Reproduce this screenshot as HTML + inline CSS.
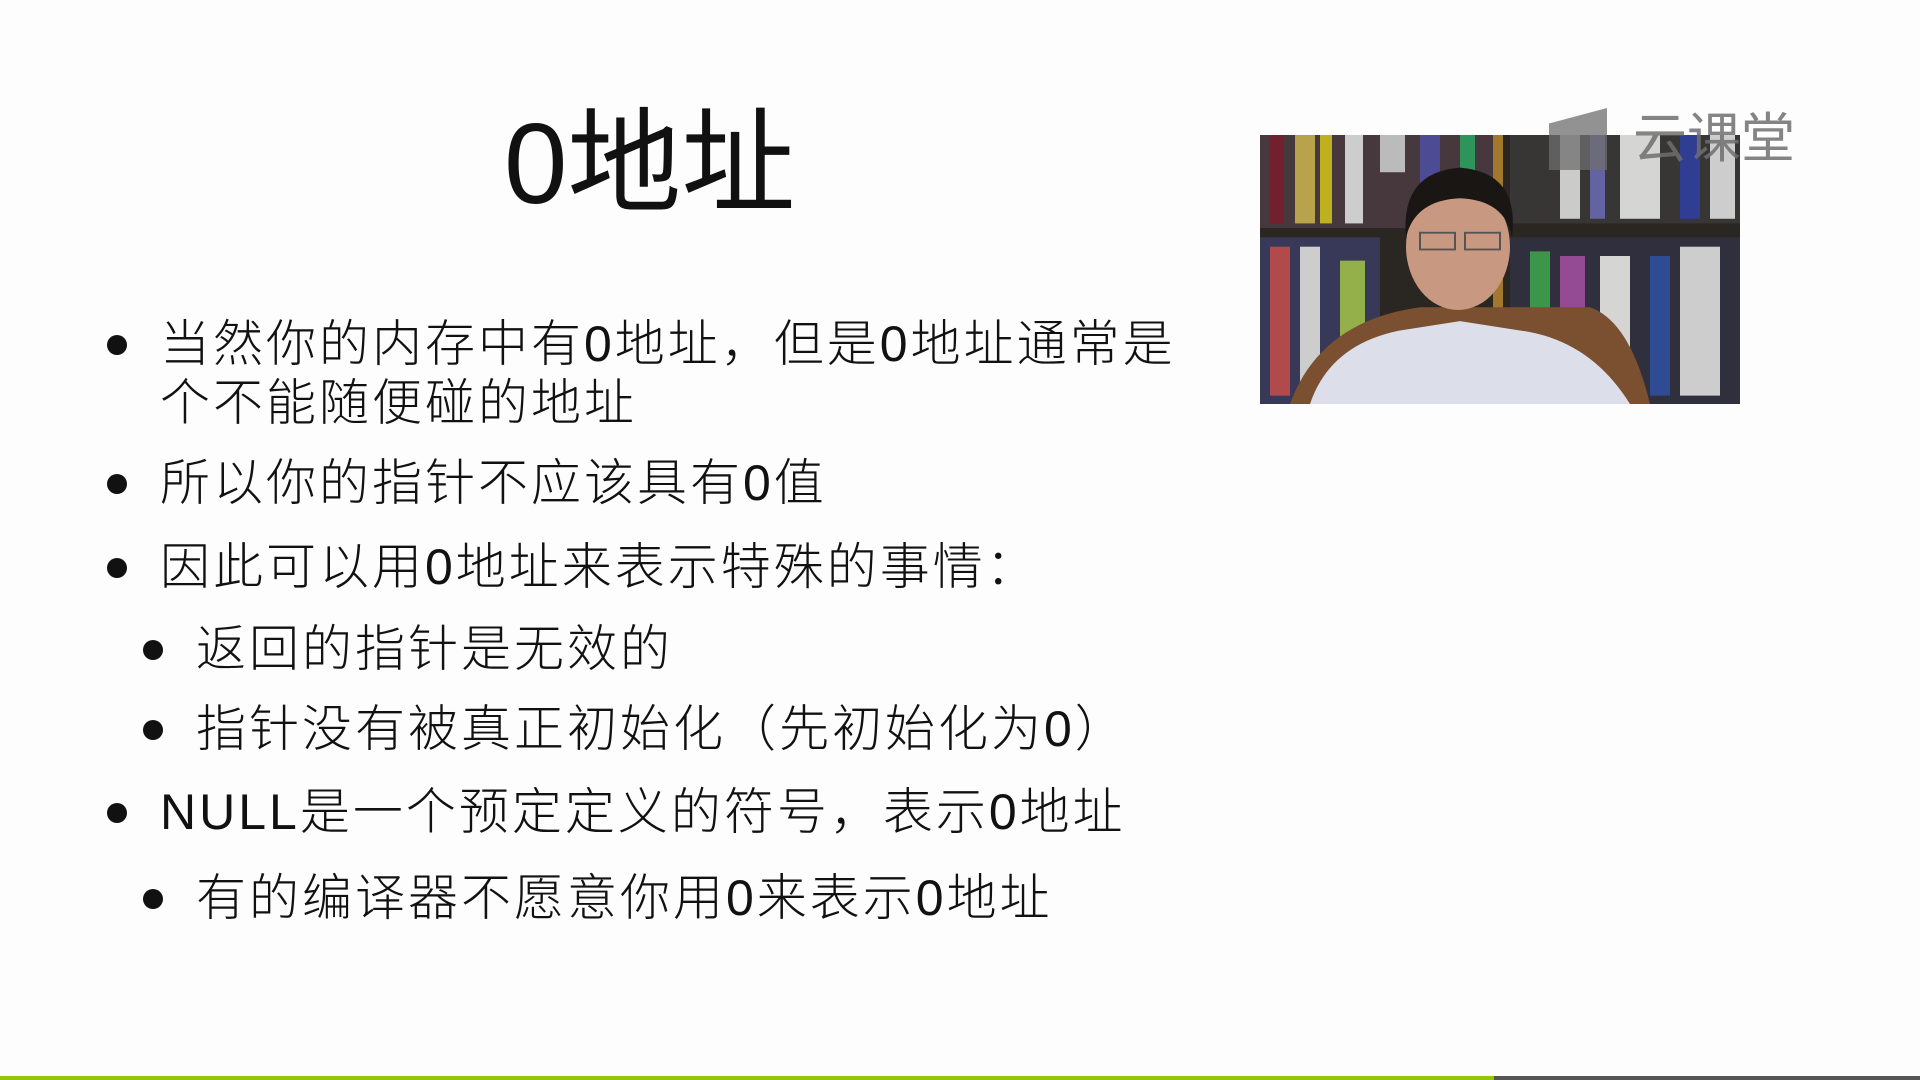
<!DOCTYPE html>
<html><head><meta charset="utf-8"><style>
html,body{margin:0;padding:0;}
body{width:1920px;height:1080px;background:#fdfdfd;position:relative;overflow:hidden;font-family:"Liberation Sans","Noto Sans CJK SC",sans-serif;color:#111;}
.t{position:absolute;white-space:nowrap;font-size:50px;line-height:1;letter-spacing:3px;font-weight:300;}
.d{position:absolute;width:20px;height:20px;border-radius:50%;background:#111;}
</style></head><body>
<div class="t" style="left:504px;top:108px;font-size:114px;letter-spacing:0;font-weight:400">0地址</div>

<div class="d" style="left:107px;top:335px"></div>
<div class="t" style="left:160px;top:319px">当然你的内存中有0地址，但是0地址通常是</div>
<div class="t" style="left:160px;top:378px">个不能随便碰的地址</div>
<div class="d" style="left:107px;top:474px"></div>
<div class="t" style="left:160px;top:458px">所以你的指针不应该具有0值</div>
<div class="d" style="left:107px;top:558px"></div>
<div class="t" style="left:160px;top:542px">因此可以用0地址来表示特殊的事情：</div>
<div class="d" style="left:143px;top:640px"></div>
<div class="t" style="left:196px;top:624px">返回的指针是无效的</div>
<div class="d" style="left:143px;top:720px"></div>
<div class="t" style="left:196px;top:704px">指针没有被真正初始化（先初始化为0）</div>
<div class="d" style="left:107px;top:803px"></div>
<div class="t" style="left:160px;top:787px">NULL是一个预定定义的符号，表示0地址</div>
<div class="d" style="left:143px;top:889px"></div>
<div class="t" style="left:196px;top:873px">有的编译器不愿意你用0来表示0地址</div>

<svg style="position:absolute;left:1260px;top:135px" width="480" height="269" viewBox="0 0 480 289" preserveAspectRatio="none">
<rect width="480" height="289" fill="#2a2622"/>
<g opacity="0.9">
<rect x="0" y="0" width="240" height="100" fill="#4a3a40"/>
<rect x="10" y="0" width="14" height="95" fill="#7a2030"/><rect x="35" y="0" width="20" height="95" fill="#c8b050"/>
<rect x="60" y="0" width="12" height="95" fill="#d0c020"/><rect x="85" y="0" width="18" height="95" fill="#e0e0e0"/>
<rect x="120" y="0" width="25" height="40" fill="#ccc"/><rect x="160" y="0" width="20" height="60" fill="#5050a0"/>
<rect x="200" y="0" width="15" height="90" fill="#30a060"/>
<rect x="250" y="0" width="230" height="95" fill="#3a3838"/>
<rect x="300" y="0" width="20" height="90" fill="#ddd"/><rect x="330" y="0" width="15" height="90" fill="#6a6ab0"/>
<rect x="360" y="0" width="40" height="90" fill="#e8e8e8"/><rect x="420" y="0" width="20" height="90" fill="#3040a0"/>
<rect x="450" y="0" width="25" height="90" fill="#e0e0e0"/>
<rect x="0" y="110" width="120" height="179" fill="#3a3a60"/>
<rect x="10" y="120" width="20" height="160" fill="#c05050"/><rect x="40" y="120" width="20" height="160" fill="#e0e0e0"/>
<rect x="80" y="135" width="25" height="140" fill="#a0c050"/>
<rect x="250" y="110" width="230" height="179" fill="#303040"/>
<rect x="270" y="125" width="20" height="150" fill="#40a050"/><rect x="300" y="130" width="25" height="145" fill="#a050a0"/>
<rect x="340" y="130" width="30" height="150" fill="#e8e8e8"/><rect x="390" y="130" width="20" height="150" fill="#3050a0"/>
<rect x="420" y="120" width="40" height="160" fill="#e0e0e0"/>
<rect x="233" y="0" width="10" height="289" fill="#b08030"/>
</g>
<path d="M30 289 Q60 200 160 185 L330 185 Q370 200 390 289 Z" fill="#7a5030"/>
<path d="M50 289 Q70 225 140 210 L200 200 L260 210 Q330 220 370 289 Z" fill="#dcdeea"/>
<ellipse cx="198" cy="120" rx="52" ry="68" fill="#c89880"/>
<path d="M146 110 Q140 40 200 35 Q260 40 252 110 Q245 70 200 68 Q155 70 146 110Z" fill="#1a1614"/>
<rect x="160" y="105" width="35" height="18" fill="none" stroke="#555" stroke-width="2"/>
<rect x="205" y="105" width="35" height="18" fill="none" stroke="#555" stroke-width="2"/>
</svg>
<div style="position:absolute;left:1549px;top:108px;width:58px;height:62px;background:rgba(110,110,110,0.75);clip-path:polygon(0 25%,100% 0,100% 100%,0 100%)"></div>
<div class="t" style="left:1633px;top:112px;font-size:54px;color:rgba(110,110,110,0.85);letter-spacing:0;font-weight:400">云课堂</div>

<div style="position:absolute;left:0;top:1076px;width:1494px;height:4px;background:#93c50a"></div>
<div style="position:absolute;left:1494px;top:1076px;width:426px;height:4px;background:#555"></div>
</body></html>
